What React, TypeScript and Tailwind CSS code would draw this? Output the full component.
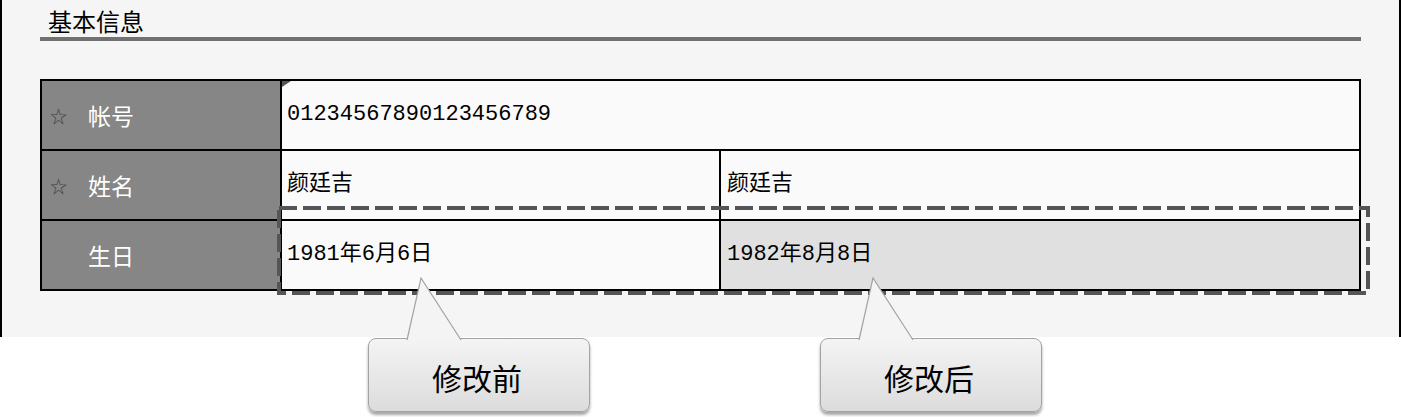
import React from 'react';

const cjk = "font-['Liberation_Mono','Noto_Sans_CJK_SC',monospace]";
const sans = "font-['Noto_Sans_CJK_SC',sans-serif]";

function LabelCell({ label, required }: { label: string; required?: boolean }) {
  return (
    <div className={`bg-[#868686] flex items-center pl-2 ${sans}`}>
      <span className="w-[38px] text-[17px] leading-none text-[#3c3c3c]">{required ? '☆' : ''}</span>
      <span className="text-[23px] leading-none text-white">{label}</span>
    </div>
  );
}

function ValueCell({ children, className = '' }: { children: React.ReactNode; className?: string }) {
  return (
    <div className={`flex items-center text-[22px] leading-none text-black ${cjk} ${className}`}>
      {children}
    </div>
  );
}

function Callout({ text }: { text: string }) {
  return (
    <div className="relative w-[222px] h-[74px] rounded-[8px] border border-[#a3a3a3] bg-gradient-to-b from-[#f4f4f4] to-[#dcdcdc] shadow-[0_3px_3px_rgba(0,0,0,0.35)] flex items-center justify-center pt-1 pr-1">
      {/* pointer */}
      <svg className="absolute left-[30px] top-[-62px]" width="70" height="64" viewBox="0 0 70 64">
        <polygon points="22,1 8,63 62,63" fill="#f4f4f4" />
        <polyline points="8,63 22,1 62,63" fill="none" stroke="#a3a3a3" strokeWidth="1.2" />
      </svg>
      <span className={`text-[30px] leading-none text-black ${sans}`}>{text}</span>
    </div>
  );
}

export default function App() {
  return (
    <div className="w-[1401px] h-[417px] bg-white overflow-hidden">
      <div className="relative h-[337px] border-x-2 border-black bg-[#f5f5f5] pl-[38px]">
        {/* section title */}
        <div className="w-[1321px] pt-[7px] pb-[3px] pl-2 border-b-4 border-[#717171]">
          <h2 className={`text-[24px] leading-[27px] text-black ${sans}`}>基本信息</h2>
        </div>

        {/* info table */}
        <div className="mt-[38px] w-[1321px] grid grid-cols-[238px_437px_1fr] auto-rows-[68px] gap-[2px] bg-black border-2 border-black">
          <LabelCell label="帐号" required />
          <ValueCell className="relative col-span-2 bg-[#fafafa] pl-[5px]">
            <svg className="absolute left-0 top-0" width="9" height="6" viewBox="0 0 9 6">
              <polygon points="0,0 9,0 0,6" fill="#555" />
            </svg>
            01234567890123456789
          </ValueCell>

          <LabelCell label="姓名" required />
          <ValueCell className="bg-[#fafafa] pl-[5px]">颜廷吉</ValueCell>
          <ValueCell className="bg-[#fafafa] pl-[6px]">颜廷吉</ValueCell>

          <LabelCell label="生日" />
          <ValueCell className="bg-[#fafafa] pl-[5px]">1981年6月6日</ValueCell>
          <ValueCell className="bg-[#e0e0e0] pl-[6px]">1982年8月8日</ValueCell>
        </div>

        {/* changed-row highlight */}
        <svg className="absolute left-[275px] top-[206px]" width="1097" height="92" viewBox="0 0 1097 92">
          <rect x="2" y="2" width="1089" height="85" fill="none" stroke="#555" strokeWidth="4" strokeDasharray="18 6" />
        </svg>
      </div>

      {/* callouts */}
      <div className="flex gap-[230px] pl-[368px] pt-[1px]">
        <Callout text="修改前" />
        <Callout text="修改后" />
      </div>
    </div>
  );
}
